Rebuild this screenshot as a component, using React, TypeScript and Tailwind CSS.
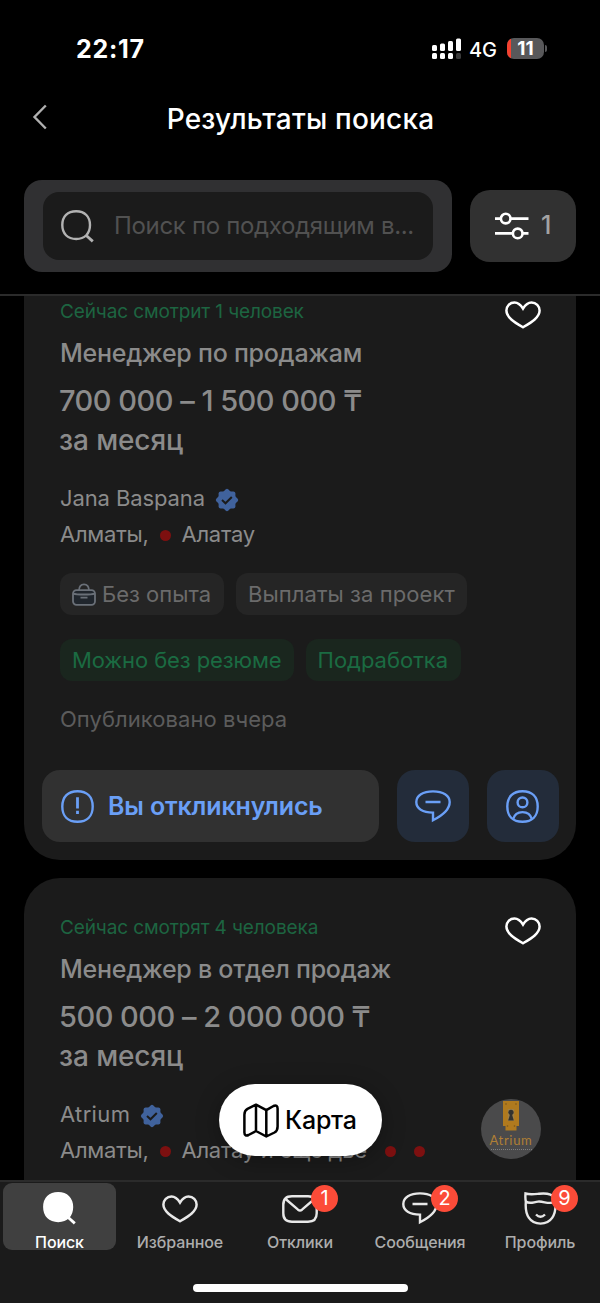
import type { ReactNode } from 'react';
import clsx from 'clsx';

const SQUIRCLE = 'M16.5 1.3C25.8 1.3 31.7 6.6 31.7 16.5S25.8 31.7 16.5 31.7 1.3 26.4 1.3 16.5 7.2 1.3 16.5 1.3Z';

interface IconProps {
    className?: string;
}

function HeartIcon({ className }: IconProps) {
    return (
        <svg viewBox="0 0 36 28" fill="none" stroke="currentColor" strokeWidth="2.5" className={clsx('w-9 h-7', className)}>
            <path d="M18 7.6C15.5 3.5 13 1.5 9.5 1.5 4.9 1.5 1.4 4.9 1.4 9.6 1.4 16.3 9 20.9 18 26.3c9-5.4 16.6-10 16.6-16.7 0-4.7-3.5-8.1-8.1-8.1-3.5 0-6 2-8.5 6.1Z" />
        </svg>
    );
}

function ChatIcon() {
    return (
        <svg viewBox="0 0 36 33" fill="none" stroke="currentColor" strokeWidth="2.4" className="w-9 h-[33px]">
            <path d="M18 1.4C8 1.4 1.3 5.5 1.3 12.1c0 6.5 6.2 10.5 16.7 10.5v7.7c10-5 16.7-10.9 16.7-18.2C34.7 5.5 28 1.4 18 1.4ZM10.5 12h15" />
        </svg>
    );
}

function UserIcon() {
    return (
        <svg viewBox="0 0 33 33" fill="none" stroke="currentColor" strokeWidth="2.4" className="w-[33px] h-[33px]">
            <path d={SQUIRCLE} />
            <circle cx="16.5" cy="12.4" r="4.9" />
            <path d="M7.2 29c1.2-4.6 4.4-6.9 9.3-6.9s8.1 2.3 9.3 6.9" />
        </svg>
    );
}

function AlertIcon() {
    return (
        <svg viewBox="0 0 33 33" fill="none" stroke="currentColor" strokeWidth="2.4" className="w-[33px] h-[33px]">
            <path d={SQUIRCLE} />
            <path d="M16.5 7.2v11.3M16.5 20.8v3.2" strokeWidth="2.8" />
        </svg>
    );
}

function SearchIcon({ filled = false }: { filled?: boolean }) {
    return (
        <svg viewBox="0 0 33 33" fill={filled ? 'currentColor' : 'none'} stroke="currentColor" strokeWidth="2.4" className="w-[33px] h-[33px]">
            <path d="M15.2 1.3C23.8 1.3 29 6.6 29 15.1s-5.2 13.9-13.8 13.9S1.3 23.7 1.3 15.1 6.6 1.3 15.2 1.3Z" />
            <path d="M25 25.2l6.8 6.2" strokeWidth="2.8" />
        </svg>
    );
}

function FiltersIcon() {
    return (
        <svg viewBox="0 0 34 28" fill="none" stroke="currentColor" strokeWidth="2.6" className="w-[34px] h-7">
            <path d="M0 6.6h5.8M15.6 6.6H33.5M0 21.4h17.8M27.6 21.4h5.9" />
            <circle cx="10.7" cy="6.6" r="4.8" />
            <circle cx="22.7" cy="21.4" r="4.8" />
        </svg>
    );
}

function MapIcon() {
    return (
        <svg viewBox="0 0 36 35" fill="none" stroke="currentColor" strokeWidth="2.5" strokeLinejoin="round" className="w-9 h-[35px]">
            <path d="M13 1.7L23.3 7.2 30.5 3C33 1.8 34.6 3 34.6 5.6V23.5c0 3-.9 4.8-3.1 6L23.3 33.5 13 28 5.5 32C3 33.2 1.4 32 1.4 29.4V11.7c0-3 .9-4.7 3.1-5.9ZM13 1.7V28M23.3 7.2V33.5" />
        </svg>
    );
}

function BriefcaseIcon() {
    return (
        <svg viewBox="0 0 24 23" fill="none" stroke="#6a7078" strokeWidth="1.8" className="w-6 h-[23px] shrink-0">
            <path d="M7 7.2C7.2 3.5 8.5 1.3 12 1.3s4.8 2.2 5 5.9" />
            <rect x="1" y="7.2" width="22" height="14.6" rx="3.5" fill="#20262d" />
            <path d="M1.2 10.6c3.5 1.2 18 1.2 21.6 0M8.5 14.7h7" />
        </svg>
    );
}

function VerifiedIcon() {
    return (
        <svg viewBox="0 0 24 24" fill="#40629c" className="w-6 h-6 mt-[3px]">
            <rect x="3.6" y="3.6" width="16.8" height="16.8" rx="2" />
            <rect x="3.6" y="3.6" width="16.8" height="16.8" rx="2" transform="rotate(45 12 12)" />
            <path d="M7 12l3.5 3.3 6.3-6.3" fill="none" stroke="#1b1b1b" strokeWidth="2" />
        </svg>
    );
}

function MailIcon() {
    return (
        <svg viewBox="0 0 36 28" fill="none" stroke="currentColor" strokeWidth="2.4" className="w-9 h-7">
            <path d="M10 1.3h16c6 0 8.7 2.5 8.7 8.5v8.4c0 6-2.7 8.5-8.7 8.5H10c-6 0-8.7-2.5-8.7-8.5V9.8C1.3 3.8 4 1.3 10 1.3Z" />
            <path d="M3 3.5l13 11.2q2 1.6 4 0L33 3.5" />
        </svg>
    );
}

function FaceIcon() {
    return (
        <svg viewBox="0 0 33 33" fill="none" stroke="currentColor" strokeWidth="2.4" className="w-[33px] h-[33px]">
            <path d="M1.5 1.5c4.5 1.4 9 .7 13.5.2C24 .7 31 2.5 31.3 9.8 25 13 20 9 14 9.6 9.5 10 5.5 12.5 1.9 9.5 1.2 7 1.3 4 1.5 1.5Z" />
            <path d="M1.9 9.5C.6 23 6 31.6 16.5 31.6S32.600 23 31.300 9.800M12 22.500q4.500 4.600 9 0" />
        </svg>
    );
}

function AtriumLogo() {
    return (
        <div className="w-[60px] h-[60px] rounded-full bg-[#4a4a4b] overflow-hidden flex flex-col items-center">
            <svg viewBox="0 0 16 32" className="w-4 h-8 shrink-0">
                <path d="M0 2h16v25h-2.5v4.5h-11V27H0Z" fill="#b07a1e" />
                <path d="M4.8 10h6.4v12H4.8Z" fill="#a08046" />
                <circle cx="8" cy="13.3" r="2.6" fill="#33322f" />
                <path d="M8 12l2.8 9.5H5.2Z" fill="#33322f" />
                <circle cx="3" cy="5" r=".8" fill="#7a561b" />
                <circle cx="13" cy="5" r=".8" fill="#7a561b" />
                <circle cx="4.5" cy="27" r=".8" fill="#7a561b" />
                <circle cx="11.5" cy="27" r=".8" fill="#7a561b" />
            </svg>
            <span className="font-['Lato'] text-[13px] leading-[18px] tracking-[0.7px] text-[#b07f35]">Atrium</span>
            <div className="w-[41px] border-t border-dotted border-[#7f7f7f]" />
        </div>
    );
}

function Dot() {
    return <span className="w-[11px] h-[11px] rounded-full bg-[#7d1010] mt-[2px]" />;
}

function StatusBar() {
    return (
        <div className="flex items-center justify-between h-[97px] pl-[76px] pr-[53px]">
            <span className="mt-[2px] text-[25px] font-bold tracking-[0.7px]">22:17</span>
            <div className="flex items-center">
                <svg viewBox="0 0 30 22" fill="#fff" className="w-[30px] h-[22px] mr-px">
                    <rect x="0" y="7" width="5" height="6" rx="1.5" />
                    <rect x="8" y="5.5" width="5" height="7.5" rx="1.5" />
                    <rect x="16" y="3" width="5" height="10" rx="1.5" />
                    <rect x="24" y="0.5" width="5" height="12.5" rx="1.5" />
                    <rect x="0" y="15" width="5" height="6" rx="1.5" />
                    <rect x="8" y="15" width="5" height="6" rx="1.5" />
                    <rect x="16" y="15" width="5" height="6" rx="1.5" />
                    <rect x="24" y="15" width="5" height="6" rx="1.5" fill="#3a3a3a" />
                </svg>
                <span className="ml-[6px] mt-[2px] text-[20px] font-medium">4G</span>
                <div className="ml-[10px] w-[37px] h-[21px] rounded-[7px] overflow-hidden bg-[#58585a] flex items-center">
                    <span className="w-1 h-full bg-[#f5412f]" />
                    <span className="flex-1 text-center text-[19px] leading-[21px] font-bold -ml-1">11</span>
                </div>
                <span className="ml-[1px] w-[2px] h-[7px] rounded-r-full bg-[#58585a]" />
            </div>
        </div>
    );
}

interface Vacancy {
    watching: string;
    title: string;
    salary: string;
    company: string;
    district: string;
    extraDots: number;
}

function VacancyCard({ v, logo, children }: { v: Vacancy; logo?: ReactNode; children?: ReactNode }) {
    return (
        <div className="mx-6 h-[598px] shrink-0 rounded-[36px] bg-[#1b1b1b] pt-9 text-[#8b8b8b]">
            <div className="flex justify-between px-9">
                <div className="mt-px text-[19px] leading-[26px] tracking-[-0.12px] text-[#1d6541]">{v.watching}</div>
                <HeartIcon className="mt-[3px] mr-[-0.5px] text-white" />
            </div>
            <div className="px-9 whitespace-nowrap">
                <div className="mt-2 text-[25px] leading-8 font-medium tracking-[-0.25px]">{v.title}</div>
                <div className="mt-[12px] text-[29px] leading-[39px] font-medium tracking-[-0.5px] -ml-px">{v.salary}</div>
                <div className="mt-px text-[28px] leading-[39px] font-medium tracking-[-0.1px] -ml-px">за месяц</div>
            </div>
            <div className="mt-5 flex pl-9 pr-[35px] text-[22px] leading-9">
                <div className="flex-1 whitespace-nowrap">
                    <div className="flex items-center">
                        <span className={clsx('mr-[10px]', v.company.length > 8 ? 'tracking-[-0.1px]' : 'tracking-[0.35px]')}>{v.company}</span>
                        <VerifiedIcon />
                    </div>
                    <div className="flex items-center tracking-[-0.25px]">
                        Алматы,
                        <span className="ml-[11px] mr-[11px] flex"><Dot /></span>
                        {v.district}
                        <span className="ml-[18px] flex gap-[18px]">
                            {Array.from({ length: v.extraDots }, (_, i) => <Dot key={i} />)}
                        </span>
                    </div>
                </div>
                {logo && <div className="mt-[3px]">{logo}</div>}
            </div>
            {children}
        </div>
    );
}

function Chip({ children, green }: { children: ReactNode; green?: boolean }) {
    return (
        <div
            className={clsx(
                'flex items-center h-[42px] px-3 rounded-[12px] text-[22px] whitespace-nowrap',
                green ? 'bg-[#1a261e] text-[#1b6b42]' : 'bg-[#252525] text-[#6b6b6b]'
            )}
        >
            {children}
        </div>
    );
}

function Tab({ icon, label, badge, active }: { icon: ReactNode; label: string; badge?: number; active?: boolean }) {
    return (
        <div className="flex-1 flex">
            <div
                className={clsx(
                    'flex flex-col items-center h-[67px] mt-px',
                    active ? 'ml-[3px] mr-1 flex-1 rounded-[9px] bg-[#404040] text-white' : 'w-full text-[#e8e8e8]'
                )}
            >
                <div className="relative h-[49px] mt-px shrink-0 flex items-center">
                    {icon}
                    {badge && (
                        <span className="absolute top-px left-1/2 ml-[11px] w-[27px] h-[27px] rounded-full bg-[#fc4b38] text-white text-[20px] leading-[27px] text-center">
                            {badge}
                        </span>
                    )}
                </div>
                <span className={clsx('text-[16px] leading-[18px] font-medium whitespace-nowrap tracking-[-0.1px]', !active && 'text-[#adadad]')}>{label}</span>
            </div>
        </div>
    );
}

const vacancies: Vacancy[] = [
    {
        watching: 'Сейчас смотрит 1 человек',
        title: 'Менеджер по продажам',
        salary: '700 000 – 1 500 000 ₸',
        company: 'Jana Baspana',
        district: 'Алатау',
        extraDots: 0,
    },
    {
        watching: 'Сейчас смотрят 4 человека',
        title: 'Менеджер в отдел продаж',
        salary: '500 000 – 2 000 000 ₸',
        company: 'Atrium',
        district: 'Алатау и еще две',
        extraDots: 2,
    },
];

export default function App() {
    return (
        <div className="w-[600px] h-[1303px] flex flex-col overflow-hidden bg-black text-white font-['Inter',sans-serif]">
            <header className="h-[296px] shrink-0 border-b-2 border-[#2b2b2b]">
                <StatusBar />
                <div className="flex items-center h-[42px] px-8">
                    <svg viewBox="0 0 16 26" fill="none" stroke="#b0b0b0" strokeWidth="2.4" className="w-4 h-[26px] -mt-[2px]">
                        <path d="M13.8 1.5L2.5 13l11.3 11.5" />
                    </svg>
                    <h1 className="flex-1 mt-[2px] text-center text-[28px] font-medium tracking-[0.2px] mr-[15px]">Результаты поиска</h1>
                </div>
                <div className="flex items-center mt-[41px] px-6 gap-[18px]">
                    <div className="w-[428px] h-[92px] rounded-[18px] bg-[#303032] px-[19px] flex items-center">
                        <div className="w-full h-[68px] rounded-[16px] bg-[#1b1b1b] flex items-center pl-[18px] text-[#b2b2b2]">
                            <SearchIcon />
                            <span className="ml-5 text-[24px] tracking-[-0.33px] whitespace-nowrap text-[#515151]">Поиск по подходящим в...</span>
                        </div>
                    </div>
                    <button className="flex-1 h-[72px] rounded-[20px] bg-[#313131] flex items-center pl-[25px]">
                        <FiltersIcon />
                        <span className="ml-[12px] text-[25px] font-medium text-[#a3a3a3]">1</span>
                    </button>
                </div>
            </header>

            <main className="relative flex-1 min-h-0 overflow-hidden">
                <div className="-mt-[34px] flex flex-col gap-[18px]">
                    <VacancyCard v={vacancies[0]}>
                        <div className="mt-[21px] flex gap-3 px-9">
                            <Chip>
                                <BriefcaseIcon />
                                <span className="ml-[6px] pr-px">Без опыта</span>
                            </Chip>
                            <Chip>
                                <span className="tracking-[0.07px]">Выплаты за проект</span>
                            </Chip>
                        </div>
                        <div className="mt-6 flex gap-3 px-9">
                            <Chip green>
                                <span className="tracking-[-0.1px]">Можно без резюме</span>
                            </Chip>
                            <Chip green>
                                <span className="pr-px">Подработка</span>
                            </Chip>
                        </div>
                        <div className="mt-[22px] px-9 text-[22px] leading-8 tracking-[0.05px] text-[#5c5c5c]">Опубликовано вчера</div>
                        <div className="mt-[35px] flex gap-[18px] pl-[18px] pr-[17.5px] text-[#6a9ff6]">
                            <button className="flex-1 h-[72px] rounded-[18px] bg-[#313131] flex items-center pl-[19px]">
                                <AlertIcon />
                                <span className="ml-[14px] mt-px text-[25px] font-semibold tracking-[-0.15px]">Вы откликнулись</span>
                            </button>
                            <button className="w-[72px] h-[72px] rounded-[18px] bg-[#232c3a] flex items-center justify-center">
                                <ChatIcon />
                            </button>
                            <button className="w-[72px] h-[72px] rounded-[18px] bg-[#232c3a] flex items-center justify-center">
                                <UserIcon />
                            </button>
                        </div>
                    </VacancyCard>
                    <VacancyCard v={vacancies[1]} logo={<AtriumLogo />} />
                </div>

                <button className="absolute left-[219px] bottom-6 w-[163px] h-[72px] rounded-full bg-white text-black flex items-center pl-6 shadow-[0_4px_24px_rgba(0,0,0,0.3)]">
                    <MapIcon />
                    <span className="ml-[6px] mt-[2px] text-[25px] font-medium tracking-[-0.25px]">Карта</span>
                </button>
            </main>

            <nav className="h-[123px] shrink-0 flex flex-col border-t-2 border-[#2b2b2b] bg-[#1b1b1b]">
                <div className="flex">
                    <Tab active icon={<SearchIcon filled />} label="Поиск" />
                    <Tab icon={<HeartIcon />} label="Избранное" />
                    <Tab icon={<MailIcon />} label="Отклики" badge={1} />
                    <Tab icon={<ChatIcon />} label="Сообщения" badge={2} />
                    <Tab icon={<FaceIcon />} label="Профиль" badge={9} />
                </div>
                <div className="mt-auto mb-[11px] mx-auto w-[215px] h-2 rounded-full bg-white" />
            </nav>
        </div>
    );
}
